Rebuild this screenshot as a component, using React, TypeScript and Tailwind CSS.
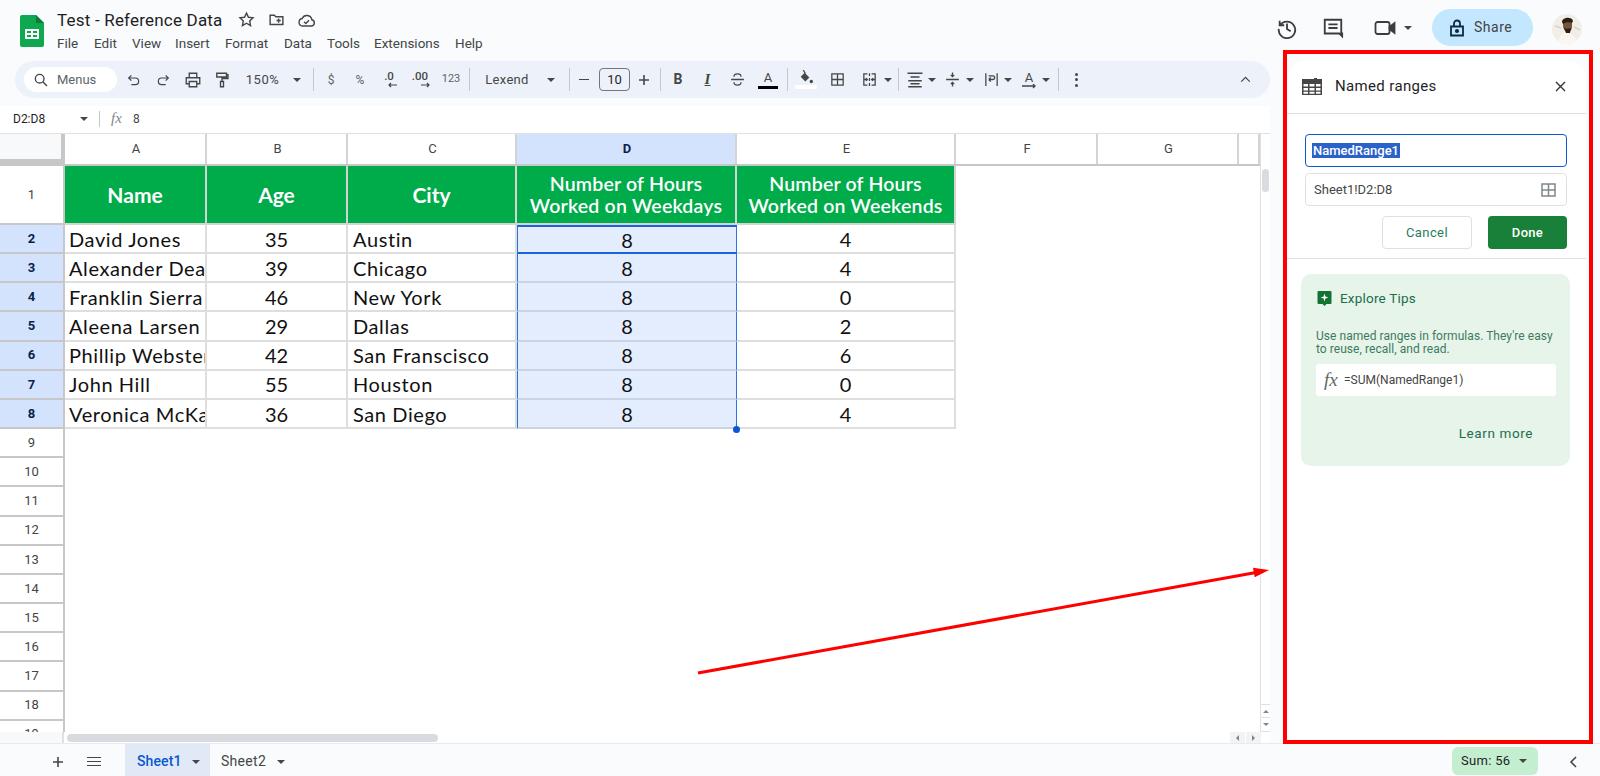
import React from "react";

const sans = "font-['Roboto','Liberation_Sans',sans-serif]";
const ic = "fill-none stroke-[#444746] stroke-[1.8]";

function Caret({ className = "" }: { className?: string }) {
  return <span className={`inline-block w-0 h-0 border-x-[4px] border-x-transparent border-t-[4px] border-t-[#444746] shrink-0 ${className}`} />;
}
function Slot({ w, children }: { w: string; children?: React.ReactNode }) {
  return <div className={`${w} h-full flex items-center justify-center shrink-0 text-[#444746]`}>{children}</div>;
}
function Sep() {
  return <div className="w-px h-[23px] bg-[#c7c7c7] shrink-0" />;
}
function Svg({ children, s = 18 }: { children: React.ReactNode; s?: number }) {
  return <svg width={s} height={s} viewBox="0 0 24 24" className={ic}>{children}</svg>;
}

const names = ["David Jones", "Alexander Dean", "Franklin Sierra", "Aleena Larsen", "Phillip Webster", "John Hill", "Veronica McKay"];
const ages = [35, 39, 46, 29, 42, 55, 36];
const cities = ["Austin", "Chicago", "New York", "Dallas", "San Franscisco", "Houston", "San Diego"];
const wk = [4, 4, 0, 2, 6, 0, 4];

const tableFont = "font-['Lato','Noto_Sans',sans-serif]";

function ColHead({ label, active }: { label: string; active?: boolean }) {
  return (
    <div className={`h-full flex items-center justify-center border-r-[2px] border-[#d4d4d4] text-[13px] pl-[2px] ${active ? "bg-[#d3e3fd] font-bold text-[#0b1f4a]" : "bg-white text-[#444]"}`}>{label}</div>
  );
}
function RowNum({ n, active }: { n: number; active?: boolean }) {
  return (
    <div className={`h-[29.17px] flex items-center justify-center border-b-[2px] border-r-[2px] border-[#c7c7c7] text-[13px] ${active ? "bg-[#d3e3fd] font-bold text-[#0b1f4a]" : "bg-white text-[#444]"}`}>{n}</div>
  );
}

export default function App() {
  return (
    <div className={`relative w-[1600px] h-[776px] overflow-hidden bg-[#f9fbfd] flex flex-col ${sans}`}>
      <div className="flex h-[743px]">
        {/* left */}
        <div className="w-[1270px] flex flex-col shrink-0">
          <div className="h-[61px] flex shrink-0">
            <div className="w-[57px] pl-[20px] pt-[15px]">
              <svg width="24" height="32" viewBox="0 0 24 32">
                <path d="M2 0h14l8 8v22a2 2 0 0 1-2 2H2a2 2 0 0 1-2-2V2a2 2 0 0 1 2-2z" fill="#0da84f" />
                <path d="M16 0l8 8h-8z" fill="#0a7d3b" />
                <path d="M5 14h14v10H5z M7 16v2h4v-2z M13 16v2h4v-2z M7 20v2h4v-2z M13 20v2h4v-2z" fill="#fff" fillRule="evenodd" />
              </svg>
            </div>
            <div className="flex flex-col">
              <div className="h-[39px] pt-[8px] flex items-start text-[#1f1f1f]">
                <span className="text-[17px] leading-[24px] w-[180px] tracking-[0.2px] whitespace-nowrap">Test - Reference Data</span>
                <span className="w-[19px] flex justify-center mt-[3px]">
                  <svg width="17" height="17" viewBox="0 0 24 24" className="fill-none stroke-[#444746] stroke-2"><path d="M12 3l2.800 5.900 6.400.8-4.700 4.400 1.200 6.400-5.700-3.200-5.700 3.200 1.200-6.400-4.700-4.400 6.400-.8z" /></svg>
                </span>
                <span className="w-[41px] flex justify-center mt-[3px]">
                  <svg width="17" height="17" viewBox="0 0 24 24" className="fill-none stroke-[#444746] stroke-2"><path d="M3 6h6l2 2h10v11H3z M12 13.500h6 M15 10.500v6" /></svg>
                </span>
                <span className="w-[19px] flex justify-center mt-[3px]">
                  <svg width="19" height="19" viewBox="0 0 24 24" className="fill-none stroke-[#444746] stroke-[1.8]"><path d="M7 19h11a4 4 0 0 0 .8-7.900A6.500 6.500 0 0 0 6.500 9.500 4.800 4.800 0 0 0 7 19z M9 13.500l2.200 2.200 4-4" /></svg>
                </span>
              </div>
              <div className="flex text-[13.5px] leading-[16px] text-[#444746] -mt-[4px]">
                <span className="w-[37px]">File</span>
                <span className="w-[38px]">Edit</span>
                <span className="w-[43px]">View</span>
                <span className="w-[50px]">Insert</span>
                <span className="w-[59px]">Format</span>
                <span className="w-[43px]">Data</span>
                <span className="w-[47px]">Tools</span>
                <span className="w-[81px]">Extensions</span>
                <span>Help</span>
              </div>
            </div>
          </div>

          {/* toolbar */}
          <div className="h-[37px] ml-[15px] rounded-full bg-[#edf2fa] flex items-center shrink-0 pl-[9px]">
            <div className="w-[93px] h-[25px] rounded-full bg-white flex items-center pl-[9px] gap-[8px] shrink-0">
              <svg width="16" height="16" viewBox="0 0 24 24" className="fill-none stroke-[#444746] stroke-2"><circle cx="10" cy="10" r="6.500" /><path d="M15 15l6 6" /></svg>
              <span className="text-[13px] text-[#5f6368]">Menus</span>
            </div>
            <Slot w="w-[33px]"><Svg s={16}><path d="M8 5L4 9l4 4 M4 9h10a5 5 0 0 1 0 10H8" /></Svg></Slot>
            <Slot w="w-[26px]"><Svg s={16}><path d="M16 5l4 4-4 4 M20 9H10a5 5 0 0 0 0 10h6" /></Svg></Slot>
            <Slot w="w-[34px]"><Svg s={18}><path d="M7 8V3h10v5 M7 17H3V9h18v8h-4 M7 14h10v7H7z" /></Svg></Slot>
            <Slot w="w-[24px]"><Svg s={18}><path d="M5 3h13v5H5z M18 5h2v5h-8v4 M10 14h4v7h-4z" /></Svg></Slot>
            <Slot w="w-[57px]"><span className="text-[13px] tracking-[0.5px]">150%</span></Slot>
            <Slot w="w-[12px]"><Caret /></Slot>
            <Slot w="w-[20px]"><Sep /></Slot>
            <Slot w="w-[16px]"><span className="text-[12px] text-[#5f6368]">$</span></Slot>
            <Slot w="w-[42px]"><span className="text-[12px] text-[#5f6368]">%</span></Slot>
            <Slot w="w-[16px]">
              <span className="relative text-[11.5px] font-medium leading-none -mt-[5px]">.0
                <svg width="9" height="6" viewBox="0 0 9 6" className="absolute left-[4px] top-[11px] fill-none stroke-[#444746] stroke-[1.2]"><path d="M9 3H1 M3 1L1 3l2 2" /></svg>
              </span>
            </Slot>
            <Slot w="w-[46px]">
              <span className="relative text-[11.5px] font-medium leading-none -mt-[5px]">.00
                <svg width="9" height="6" viewBox="0 0 9 6" className="absolute left-[9px] top-[11px] fill-none stroke-[#444746] stroke-[1.2]"><path d="M0 3h8 M6 1l2 2-2 2" /></svg>
              </span>
            </Slot>
            <Slot w="w-[16px]"><span className="text-[11px] text-[#5f6368]">123</span></Slot>
            <Slot w="w-[20px]"><Sep /></Slot>
            <Slot w="w-[56px]"><span className="text-[13px] tracking-[0.3px]">Lexend</span></Slot>
            <Slot w="w-[32px]"><Caret /></Slot>
            <Slot w="w-[4px]"><Sep /></Slot>
            <Slot w="w-[26px]"><span className="w-[10px] h-[1.6px] bg-[#444746]" /></Slot>
            <div className="w-[31px] h-[23px] border border-[#747775] rounded-[4px] flex items-center justify-center text-[13px] text-[#1f1f1f] shrink-0 ml-[2px]">10</div>
            <Slot w="w-[27px]"><svg width="12" height="12" viewBox="0 0 12 12" className="stroke-[#444746] stroke-[1.6]"><path d="M6 1v10M1 6h10" /></svg></Slot>
            <Slot w="w-[6px]"><Sep /></Slot>
            <Slot w="w-[30px]"><span className="text-[14px] font-bold">B</span></Slot>
            <Slot w="w-[29px]"><span className="text-[15px] font-['Liberation_Serif',serif] italic font-bold underline">I</span></Slot>
            <Slot w="w-[30px]"><Svg s={17}><path d="M17 8a5 4 0 0 0-10 0 M3 12h18 M7 16a5 4 0 0 0 10 0" /></Svg></Slot>
            <Slot w="w-[32px]">
              <span className="flex flex-col items-center">
                <span className="text-[13px] leading-[14px]">A</span>
                <span className="w-[20px] h-[3px] bg-black mt-[1px]" />
              </span>
            </Slot>
            <Slot w="w-[7px]"><Sep /></Slot>
            <Slot w="w-[29px]">
              <span className="flex flex-col items-center">
                <svg width="16" height="15" viewBox="0 0 24 22"><path d="M8 0l3 5" stroke="#444746" strokeWidth="2" fill="none" /><path d="M10 4l7 7-6 6-7-7z" fill="#444746" /><circle cx="20" cy="17" r="2.500" fill="#444746" /></svg>
                <span className="w-[22px] h-[4px] bg-white" />
              </span>
            </Slot>
            <Slot w="w-[34px]"><Svg s={17}><path d="M4 4h16v16H4z M12 4v16 M4 12h16" /></Svg></Slot>
            <Slot w="w-[30px]"><Svg s={17}><path d="M9 4H4v16h5 M15 4h5v16h-5 M12 3v4 M12 10v4 M12 17v4 M4 12h5 M7 10l2 2-2 2 M20 12h-5 M17 10l-2 2 2 2" /></Svg></Slot>
            <Slot w="w-[8px]"><Caret /></Slot>
            <Slot w="w-[13px]"><Sep /></Slot>
            <Slot w="w-[19px]"><Svg s={18}><path d="M2 3h20 M6 8h12 M3 13h18 M6 17h12 M3 21h18" /></Svg></Slot>
            <Slot w="w-[16px]"><Caret /></Slot>
            <Slot w="w-[25px]"><Svg s={17}><path d="M3 12h18 M12 2v6 M9.500 5.500L12 8l2.500-2.500 M12 22v-6 M9.500 18.500L12 16l2.500 2.500" /></Svg></Slot>
            <Slot w="w-[9px]"><Caret /></Slot>
            <div className="w-[6px] shrink-0" />
            <Slot w="w-[22px]"><Svg s={17}><path d="M4 3v18 M20 3v18 M8 12h6a2.500 2.500 0 0 0 0-5H8 M8 12l3-3 M8 12l3 3" /></Svg></Slot>
            <Slot w="w-[12px]"><Caret /></Slot>
            <div className="w-[6px] shrink-0" />
            <Slot w="w-[18px]">
              <span className="flex flex-col items-center">
                <span className="text-[13px] leading-[13px]">A</span>
                <svg width="16" height="5" viewBox="0 0 16 5" className="fill-none stroke-[#444746] stroke-[1.3]"><path d="M1 2h13 M12 0l2 2-2 2" /></svg>
              </span>
            </Slot>
            <Slot w="w-[15px]"><Caret /></Slot>
            <Slot w="w-[10px]"><Sep /></Slot>
            <Slot w="w-[26px]">
              <span className="flex flex-col gap-[2.500px]"><i className="w-[3px] h-[3px] rounded-full bg-[#444746]" /><i className="w-[3px] h-[3px] rounded-full bg-[#444746]" /><i className="w-[3px] h-[3px] rounded-full bg-[#444746]" /></span>
            </Slot>
            <div className="flex-1" />
            <div className="w-[50px] flex justify-center"><Svg s={17}><path d="M6 15l6-6 6 6" /></Svg></div>
          </div>
          <div className="h-[8px] shrink-0" />

          {/* formula bar */}
          <div className="h-[27px] bg-white flex items-center shrink-0 text-[12px] text-[#444746] pb-[2px]">
            <span className="w-[69px] pl-[13px] text-[#1f1f1f]">D2:D8</span>
            <Caret className="ml-[11px]" />
            <span className="w-px h-[16px] bg-[#c7c7c7] ml-[11px]" />
            <span className="w-[33px] pl-[11px] font-['Liberation_Serif',serif] italic text-[15px] text-[#80868b]">fx</span>
            <span>8</span>
          </div>

          {/* sheet */}
          <div className={`relative flex-1 min-h-0 bg-white overflow-hidden border-t border-[#e0e0e0] ${tableFont}`}>
            <div className="flex h-full">
              <div className="w-[1260px] flex flex-col overflow-hidden">
                <div className={`grid grid-cols-[65px_142px_141px_169px_220px_219px_142px_141px_21px] grid-rows-[30px] h-[32px] shrink-0 border-b-[2px] border-[#c7c7c7] ${sans}`}>
                  <div className="bg-[#f8f9fa] border-r-[4px] border-b-[5px] border-[#c7c7c7]" />
                  <ColHead label="A" />
                  <ColHead label="B" />
                  <ColHead label="C" />
                  <ColHead label="D" active />
                  <ColHead label="E" />
                  <ColHead label="F" />
                  <ColHead label="G" />
                  <ColHead label="" />
                </div>

                <div className="flex flex-1 min-h-0">
                  <div className={`w-[65px] shrink-0 ${sans}`}>
                    <div className="h-[59px] flex items-center justify-center border-b-[2px] border-r-[2px] border-[#c7c7c7] text-[13px] text-[#444]">1</div>
                    {[2, 3, 4, 5, 6, 7, 8].map((n) => <RowNum key={n} n={n} active />)}
                    {[9, 10, 11, 12, 13, 14, 15, 16, 17, 18, 19].map((n) => <RowNum key={n} n={n} />)}
                  </div>
                  <div className="relative flex-1">
                    <div className="grid grid-cols-[142px_141px_169px_220px_219px] grid-rows-[59px] w-[891px]">
                      {["Name", "Age", "City"].map((h) => (
                        <div key={h} className="bg-[#00ab4a] border-r-[2px] border-b-[2px] border-[#d4d4d4] flex items-center justify-center text-white font-bold text-[21px]">{h}</div>
                      ))}
                      <div className="bg-[#00ab4a] border-r-[2px] border-b-[2px] border-[#d4d4d4] flex items-center justify-center text-center text-white font-semibold text-[19.5px] leading-[22px] tracking-[0.2px] whitespace-nowrap">Number of Hours<br />Worked on Weekdays</div>
                      <div className="bg-[#00ab4a] border-r-[2px] border-b-[2px] border-[#d4d4d4] flex items-center justify-center text-center text-white font-semibold text-[19.5px] leading-[22px] tracking-[0.2px] whitespace-nowrap">Number of Hours<br />Worked on Weekends</div>
                    </div>
                    <div className="grid grid-cols-[142px_141px_169px_220px_219px] w-[891px] text-[20px] text-[#111]">
                      {names.map((name, i) => (
                        <React.Fragment key={name}>
                          <div className="h-[29.17px] border-r-[2px] border-b-[2px] border-[#dedede] pl-[4px] flex items-center overflow-hidden whitespace-nowrap tracking-[0.6px]">{name}</div>
                          <div className="h-[29.17px] border-r-[2px] border-b-[2px] border-[#dedede] flex items-center justify-center">{ages[i]}</div>
                          <div className="h-[29.17px] border-r-[2px] border-b-[2px] border-[#dedede] pl-[5px] flex items-center tracking-[0.6px]">{cities[i]}</div>
                          <div className={`h-[29.17px] bg-[#e3edfd] flex items-center justify-center border-b-[2px] border-x border-x-[#2a74e0] ${i === 0 ? "border-2 border-[#1a63d8]" : "border-b-[#c9d3e3]"} ${i === 6 ? "border-b-[#2a74e0]" : ""}`}>8</div>
                          <div className="h-[29.17px] border-r-[2px] border-b-[2px] border-[#dedede] flex items-center justify-center">{wk[i]}</div>
                        </React.Fragment>
                      ))}
                    </div>
                    <span className="absolute left-[668px] top-[260px] w-[7px] h-[7px] rounded-full bg-[#0b57d0]" />
                  </div>
                </div>
              </div>
              <div className="w-[10px] border-l border-[#e0e0e0] flex flex-col items-center pt-[35px]">
                <span className="w-[7px] h-[23px] rounded-full bg-[#d9dbe0]" />
                <div className="flex-1" />
                <div className="w-full h-[14px] border-y border-[#e0e0e0] flex items-center justify-center"><span className="w-0 h-0 border-x-[3px] border-x-transparent border-b-[3px] border-b-[#80868b]" /></div>
                <div className="w-full h-[14px] border-b border-[#e0e0e0] flex items-center justify-center"><span className="w-0 h-0 border-x-[3px] border-x-transparent border-t-[3px] border-t-[#80868b]" /></div>
              </div>
            </div>
          </div>

          {/* hscroll */}
          <div className="h-[11px] bg-white flex items-center shrink-0">
            <span className="w-[64px] h-full bg-[#f8f9fa] border-r-[2px] border-[#e0e0e0]" />
            <span className="ml-[3px] w-[371px] h-[8px] rounded-full bg-[#d9dbe0]" />
            <div className="flex-1" />
            <div className="w-[15px] h-full bg-[#f1f3f4] flex items-center justify-center"><span className="w-0 h-0 border-y-[3px] border-y-transparent border-r-[3px] border-r-[#80868b]" /></div>
            <div className="w-[15px] h-full bg-[#f1f3f4] flex items-center justify-center ml-px"><span className="w-0 h-0 border-y-[3px] border-y-transparent border-l-[3px] border-l-[#80868b]" /></div>
            <div className="w-[9px]" />
          </div>
        </div>

        {/* right */}
        <div className="flex-1 flex flex-col min-w-0">
          <div className="h-[60px] flex shrink-0 items-start text-[#444746]">
            <div className="w-[34px] h-[56px] flex items-center justify-center">
              <svg width="22" height="22" viewBox="0 0 24 24" className="fill-none stroke-[#3c3c3c] stroke-[2]"><path d="M4 4v5h5 M4.500 9A9 9 0 1 1 3 13 M12 7v6l4 2.500" /></svg>
            </div>
            <div className="w-[58px] h-[56px] flex items-center justify-center">
              <svg width="22" height="22" viewBox="0 0 24 24" className="fill-none stroke-[#3c3c3c] stroke-[2]"><path d="M3 3h18v15h1v3l-3-3H3z M7 8h10 M7 12h10" /></svg>
            </div>
            <div className="ml-[4px] w-[36px] h-[56px] flex items-center justify-center">
              <svg width="25" height="24" viewBox="0 0 24 24" className="fill-none stroke-[#3c3c3c] stroke-[1.8]"><path d="M5 6h10a2 2 0 0 1 2 2v8a2 2 0 0 1-2 2H5a2 2 0 0 1-2-2V8a2 2 0 0 1 2-2z" /><path d="M17 11l5-4v10l-5-4z" fill="#3c3c3c" /></svg>
            </div>
            <div className="w-[12px] h-[56px] flex items-center justify-center"><Caret /></div>
            <div className="ml-[18px] mt-[9px] w-[101px] h-[37px] rounded-full bg-[#c2e7ff] flex items-center pl-[17px] gap-[9px] shrink-0">
              <svg width="16" height="18" viewBox="0 0 16 18" className="fill-none stroke-[#0f2a44] stroke-[1.8]"><path d="M2 7.500h12v9H2z M5 7.500V4.500a3 3 0 0 1 6 0v3" /><circle cx="8" cy="12" r="1.200" fill="#0f2a44" /></svg>
              <span className="text-[14px] text-[#444] tracking-[0.5px]">Share</span>
            </div>
            <div className="ml-[19px] mt-[14px] w-[30px] h-[30px] rounded-full bg-[#f1eee8] overflow-hidden shrink-0">
              <svg width="30" height="30" viewBox="0 0 30 30">
                <path d="M12 18c-2 2-5 4-6 12h20c-1-6-5-8-8-10z" fill="#fbf7f0" />
                <path d="M11 8c1-4 8-4 9 0v4c0 4-2 6-4 6s-5-3-5-6z" fill="#7a5238" />
                <path d="M10 8c0-5 10-6 11-1l-1 2c-3-1-6-1-9 1z" fill="#2a1f18" />
                <path d="M12 14c2 1 5 1 7 0l-1 5h-4z" fill="#2a1f18" />
                <path d="M3 12l6 2M22 13l6 3" stroke="#d8d2c8" strokeWidth="1.500" />
              </svg>
            </div>
          </div>

          <div className="flex-1 min-h-0 flex pl-[17px] pr-[14px]">
            <div className="flex-1 bg-white rounded-t-[20px] flex flex-col">
              <div className="h-[54px] border-b border-[#e0e0e0] flex items-center shrink-0 pl-[15px]">
                <svg width="20" height="17" viewBox="0 0 20 17">
                  <path d="M0 1h12V0h3v1h5v16H0z" fill="#444746" />
                  <path d="M1.500 6h4.500v2.500H1.500z M7.500 6h5v2.500h-5z M14 6h4.500v2.500H14z M1.500 10h4.500v2.500H1.500z M7.500 10h5v2.500h-5z M14 10h4.500v2.500H14z M1.500 13.800h4.500v1.900H1.500z M7.500 13.800h5v1.900h-5z M14 13.800h4.500v1.900H14z" fill="#fff" />
                </svg>
                <span className="ml-[13px] text-[15px] tracking-[0.35px] text-[#1f1f1f]">Named ranges</span>
                <svg width="11" height="11" viewBox="0 0 11 11" className="ml-[118px] stroke-[#333] stroke-[1.4]"><path d="M1 1l9 9M10 1l-9 9" /></svg>
              </div>
              <div className="h-[145px] border-b border-[#e0e0e0] shrink-0 px-[18px] pt-[20px]">
                <div className="h-[33px] border-[1.5px] border-[#0b57d0] rounded-[4px] flex items-center pl-[6px] w-[262px]">
                  <span className="bg-[#2a62c9] text-white text-[13px] font-medium leading-[15px] px-[1px]">NamedRange1</span>
                </div>
                <div className="mt-[6px] h-[33px] border border-[#e0e0e0] rounded-[4px] flex items-center pl-[8px] pr-[10px] justify-between w-[262px]">
                  <span className="text-[13px] text-[#444746]">Sheet1!D2:D8</span>
                  <svg width="15" height="14" viewBox="0 0 15 14" className="fill-none stroke-[#80868b] stroke-[1.500]"><path d="M1 1h13v12H1z M7.500 1v12 M1 7h13" /></svg>
                </div>
                <div className="mt-[10px] flex justify-end gap-[16px] w-[262px]">
                  <div className="w-[90px] h-[33px] border border-[#e0e0e0] rounded-[4px] flex items-center justify-center text-[13px] tracking-[0.4px] text-[#1e7e5c]">Cancel</div>
                  <div className="w-[79px] h-[33px] bg-[#188038] rounded-[4px] flex items-center justify-center text-[13px] font-medium tracking-[0.3px] text-white">Done</div>
                </div>
              </div>
              <div className="mt-[15px] w-[269px] ml-[14px] h-[192px] rounded-[10px] bg-[#e6f4ea] pl-[15px] pr-[14px] shrink-0">
                <div className="flex items-center h-[47px] pt-[1px] pl-[1px]">
                  <svg width="15" height="16" viewBox="0 0 15 16"><path d="M1.500 1h12a1 1 0 0 1 1 1v11a1 1 0 0 1-1 1h-4l-2 2-2-2h-4a1 1 0 0 1-1-1V2a1 1 0 0 1 1-1z" fill="#137333" /><path d="M7.500 3.500l.9 3 3 1-3 1-.9 3-.9-3-3-1 3-1z" fill="#fff" /></svg>
                  <span className="ml-[8px] text-[13.5px] tracking-[0.2px] text-[#1e6e4e]">Explore Tips</span>
                </div>
                <div className="mt-[9px] text-[12px] leading-[13px] text-[#3f7a60] tracking-[0.05px] whitespace-nowrap">Use named ranges in formulas. They're easy<br />to reuse, recall, and read.</div>
                <div className="mt-[8px] h-[32px] bg-white rounded-[3px] flex items-center pl-[8px] w-[240px]">
                  <span className="font-['Liberation_Serif',serif] italic text-[19px] text-[#666] w-[20px]">fx</span>
                  <span className="text-[12px] text-[#444]">=SUM(NamedRange1)</span>
                </div>
                <div className="mt-[27px] pr-[23px] flex justify-end">
                  <span className="text-[13.5px] tracking-[0.6px] text-[#1e6e4e]">Learn more</span>
                </div>
              </div>
              <div className="flex-1" />
            </div>
          </div>
        </div>
      </div>

      {/* bottom */}
      <div className="h-[33px] border-t border-[#e8eaed] flex items-center shrink-0 text-[14px]">
        <div className="w-[52px] shrink-0" />
        <svg width="12" height="12" viewBox="0 0 12 12" className="stroke-[#444746] stroke-[1.6] shrink-0 mt-[3px]"><path d="M6 1v10M1 6h10" /></svg>
        <span className="ml-[23px] flex flex-col gap-[2.500px] shrink-0 mt-[3px]"><i className="block w-[14px] h-[1.500px] bg-[#444746]" /><i className="block w-[14px] h-[1.500px] bg-[#444746]" /><i className="block w-[14px] h-[1.500px] bg-[#444746]" /></span>
        <div className="ml-[24px] w-[85px] h-full bg-[#e1e9f7] flex items-center pl-[12px] pt-[3px] gap-[11px] shrink-0">
          <span className="text-[#0b57d0] font-medium tracking-[0.1px]">Sheet1</span>
          <Caret className="border-t-[#0b57d0]" />
        </div>
        <div className="w-[85px] h-full flex items-center pl-[11px] pt-[3px] gap-[11px] shrink-0">
          <span className="text-[#444746] tracking-[0.3px]">Sheet2</span>
          <Caret />
        </div>
        <div className="flex-1" />
        <div className="w-[86px] h-[28px] bg-[#c4eed0] rounded-[6px] flex items-center pl-[9px] gap-[9px] shrink-0 mt-[1px]">
          <span className="text-[#1f1f1f] text-[13px] tracking-[0.3px] whitespace-nowrap">Sum: 56</span>
          <Caret className="border-t-[#1f1f1f]" />
        </div>
        <svg width="10" height="12" viewBox="0 0 10 12" className="ml-[31px] mr-[21px] mt-[4px] fill-none stroke-[#444746] stroke-[1.6] shrink-0"><path d="M7 1L2 6l5 5" /></svg>
      </div>

      {/* annotations */}
      <div className="absolute left-[1283px] top-[50px] w-[310px] h-[694px] border-[4px] border-[#ff0000] pointer-events-none" />
      <svg className="absolute left-0 top-0 pointer-events-none" width="1600" height="776">
        <path d="M698 673L1256 572.500" stroke="#ff0000" strokeWidth="3" fill="none" />
        <path d="M1269 570L1253 567.700L1254.700 577.300z" fill="#ff0000" />
      </svg>
    </div>
  );
}
